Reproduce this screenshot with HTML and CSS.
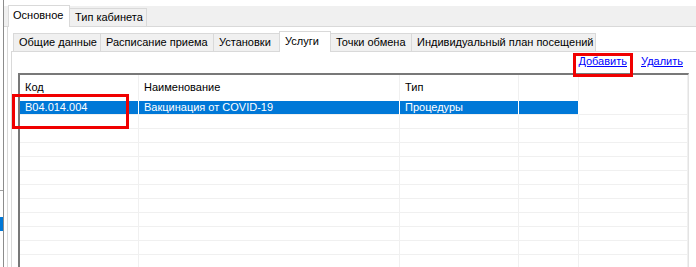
FILE: index.html
```html
<!DOCTYPE html>
<html lang="ru">

<head>
    <meta charset="utf-8">
    <title>Кабинет - услуги</title>
    <link rel="stylesheet" href="styles.css">
</head>

<body>
    <div class="screen">
        <div class="side">
            <div class="side-top"></div>
            <div class="side-sel"></div>
        </div>

        <div class="main">
            <div class="outer-strip">
                <div class="tab tab-active tab-main">Основное</div>
                <div class="tab tab-type">Тип кабинета</div>
            </div>

            <div class="outer-page">
                <div class="inner-strip">
                    <div class="tab w-general">Общие данные</div>
                    <div class="tab w-schedule">Расписание приема</div>
                    <div class="tab w-settings">Установки</div>
                    <div class="tab tab-active w-services">Услуги</div>
                    <div class="tab w-points">Точки обмена</div>
                    <div class="tab w-plan">Индивидуальный план посещений</div>
                </div>

                <div class="inner-page">
                    <div class="links">
                        <a href="#">Добавить</a>
                        <a href="#">Удалить</a>
                    </div>

                    <div class="list" id="list">
                        <div class="row head">
                            <div class="cell">Код</div>
                            <div class="cell">Наименование</div>
                            <div class="cell">Тип</div>
                            <div class="cell"></div>
                            <div class="cell"></div>
                        </div>
                        <div class="row selected">
                            <div class="cell">B04.014.004</div>
                            <div class="cell">Вакцинация от COVID-19</div>
                            <div class="cell">Процедуры</div>
                            <div class="cell"></div>
                            <div class="cell"></div>
                        </div>
                    </div>
                </div>
            </div>
        </div>

        <!-- red marks drawn over the screenshot -->
        <div class="mark mark-code"></div>
        <div class="mark mark-add"></div>
    </div>

    <script>
        // empty grid rows under the selected one
        var list = document.getElementById('list');
        for (var i = 0; i < 12; i++) {
            var row = document.createElement('div');
            row.className = 'row';
            for (var j = 0; j < 5; j++) {
                var cell = document.createElement('div');
                cell.className = 'cell';
                row.appendChild(cell);
            }
            list.appendChild(row);
        }
    </script>
</body>

</html>
```

FILE: styles.css
```css
body {
    margin: 0;
    background: #ffffff;
    font-family: 'Liberation Sans', Arial, sans-serif;
    font-size: 11px;
    color: #000000;
}

.screen {
    position: relative;
    display: flex;
    width: 696px;
    height: 267px;
    overflow: hidden;
}

/* strip of the window behind */
.side {
    width: 3px;
    border-right: 1px solid #8c8c8c;
    display: flex;
    flex-direction: column;
}

.side-top {
    height: 190px;
    border-bottom: 1px solid #a0a0a0;
}

.side-sel {
    margin-top: 26px;
    height: 14px;
    background: #0078d7;
}

.main {
    flex: 1;
    padding-left: 3px;
    display: flex;
    flex-direction: column;
}

/* tabs */
.tab {
    box-sizing: border-box;
    height: 18px;
    padding: 2px 0 0 5px;
    background: #f0f0f0;
    border: 1px solid #d9d9d9;
    border-bottom: none;
    margin-left: -1px;
    white-space: nowrap;
}

.tab-active {
    position: relative;
    z-index: 1;
    height: 21px;
    padding-top: 3px;
    background: #ffffff;
    margin-bottom: -1px;
}

.outer-strip {
    display: flex;
    align-items: flex-end;
    margin-top: 6px;
    height: 20px;
    background: #f0f0f0;
    border-bottom: 1px solid #d9d9d9;
    margin-left: -3px;
    padding-left: 5px;
}

.outer-strip .tab-active {
    height: 22px;
}

.tab-main {
    width: 62px;
    padding-left: 4px;
}

.tab-type {
    width: 78px;
}

.outer-page {
    flex: 1;
    display: flex;
    flex-direction: column;
    border-left: 1px solid #d9d9d9;
}

.inner-strip {
    display: flex;
    align-items: flex-end;
    padding: 4px 0 0 3px;
    height: 20px;
    margin-left: 3px;
    border-bottom: 1px solid #d9d9d9;
}

.w-general { width: 88px; }
.w-schedule { width: 114px; }
.w-settings { width: 67px; }
.w-services { width: 52px; }
.w-points { width: 82px; }
.w-plan { width: 185px; }

.inner-page {
    flex: 1;
    margin-left: 3px;
    border-left: 1px solid #d9d9d9;
    display: flex;
    flex-direction: column;
}

.links {
    display: flex;
    justify-content: flex-end;
    gap: 14px;
    height: 21px;
    padding: 3px 13px 0 0;
    box-sizing: border-box;
}

.links a {
    color: #0000ff;
    line-height: 13px;
}

/* list view */
.list {
    flex: 1;
    margin: 0 7px 0 6px;
    border-top: 2px solid #787878;
    border-left: 2px solid #787878;
    border-right: 1px solid #e3e3e3;
}

.row {
    display: grid;
    grid-template-columns: 119px 261px 119px 60px 1fr;
    height: 14px;
}

.cell {
    border-right: 1px solid #f0f0f0;
    border-bottom: 1px solid #f0f0f0;
    padding-left: 5px;
    line-height: 13px;
    white-space: nowrap;
    overflow: hidden;
}

.head {
    height: 26px;
}

.head .cell {
    line-height: 24px;
    border-bottom: none;
}

.selected .cell {
    background: #0078d7;
    color: #ffffff;
    border-right-color: #ffffff;
}

.selected .cell:last-child {
    background: #ffffff;
    border-right-color: #f0f0f0;
}

/* annotation boxes */
.mark {
    position: absolute;
    border: 3px solid #f00000;
}

.mark-code {
    left: 12px;
    top: 94px;
    width: 111px;
    height: 29px;
}

.mark-add {
    left: 573px;
    top: 53px;
    width: 54px;
    height: 18px;
}
```
